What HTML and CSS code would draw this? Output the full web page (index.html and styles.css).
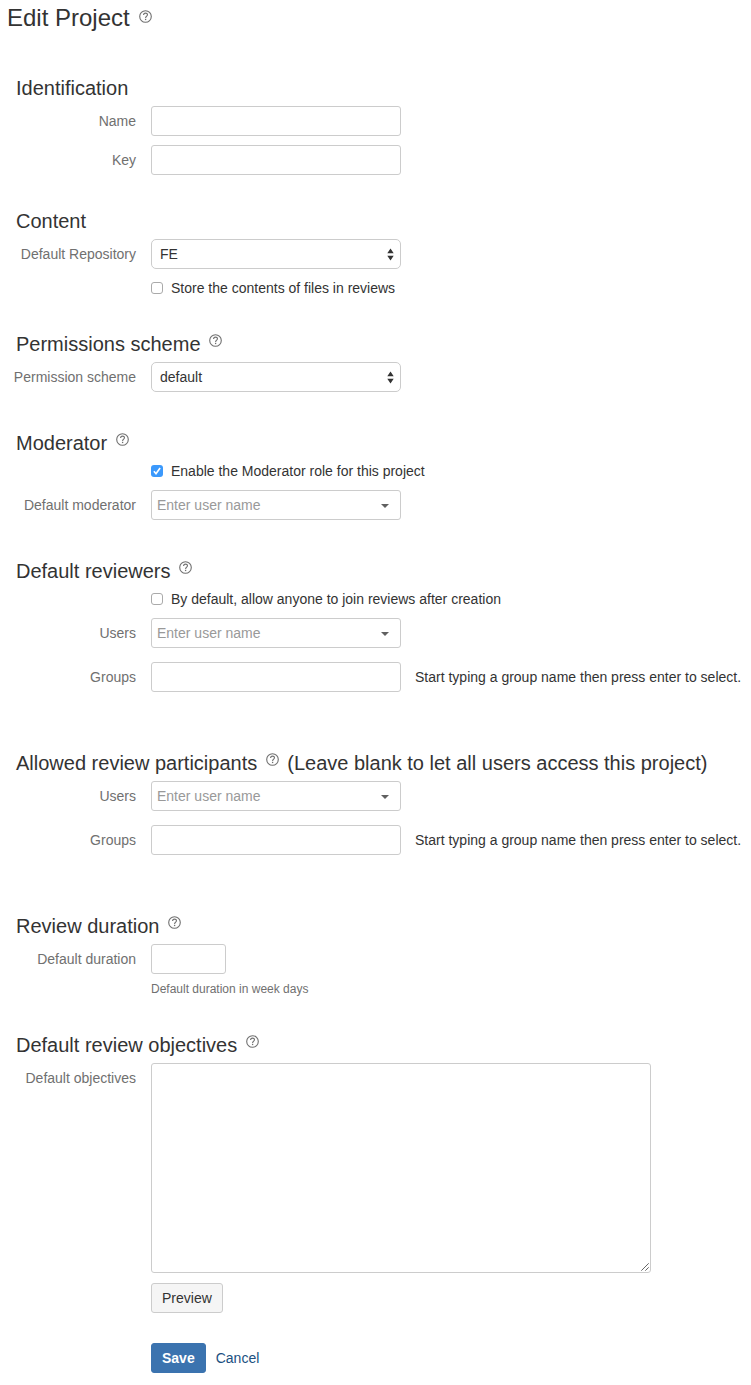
FILE: index.html
```html
<!DOCTYPE html>
<html lang="en">
<head>
<meta charset="utf-8">
<title>Edit Project</title>
<link rel="stylesheet" href="styles.css">
</head>
<body>
<svg class="defs" aria-hidden="true">
  <symbol id="help" viewBox="0 0 13 13">
    <circle cx="6.5" cy="6.5" r="5.8" fill="none" stroke="#707070" stroke-width="1.1"/>
    <path d="M4.6 5.1C4.6 3.8 5.4 3.1 6.5 3.1S8.5 3.8 8.5 4.8C8.5 6.1 6.6 6.2 6.6 8" fill="none" stroke="#707070" stroke-width="1.15"/>
    <rect x="5.95" y="8.8" width="1.3" height="1.3" fill="#707070"/>
  </symbol>
  <symbol id="updown" viewBox="0 0 7 13">
    <path d="M3.5 0.4L6.7 5.2H0.3ZM3.5 12.6L0.3 7.8H6.7Z" fill="#333"/>
  </symbol>
  <symbol id="caret" viewBox="0 0 8 4">
    <path d="M0 0H8L4 4Z" fill="#606060"/>
  </symbol>
</svg>
<main class="page">
  <h1 class="title">Edit Project <svg class="help"><use href="#help"/></svg></h1>
  <form class="form">
    <section class="section">
      <h2 class="heading">Identification</h2>
      <div class="row"><label class="label">Name</label><div class="box"></div></div>
      <div class="row"><label class="label">Key</label><div class="box"></div></div>
    </section>
    <section class="section">
      <h2 class="heading">Content</h2>
      <div class="row"><label class="label">Default Repository</label><div class="box select">FE<svg class="updown"><use href="#updown"/></svg></div></div>
      <div class="row check"><span class="tick"></span><span>Store the contents of files in reviews</span></div>
    </section>
    <section class="section">
      <h2 class="heading">Permissions scheme <svg class="help"><use href="#help"/></svg></h2>
      <div class="row"><label class="label">Permission scheme</label><div class="box select">default<svg class="updown"><use href="#updown"/></svg></div></div>
    </section>
    <section class="section spaced">
      <h2 class="heading">Moderator <svg class="help"><use href="#help"/></svg></h2>
      <div class="row check"><span class="tick checked"><svg class="mark" viewBox="0 0 12 12"><path d="M2.9 6.3L5 8.7L9.1 3.1" fill="none" stroke="#fff" stroke-width="1.7"/></svg></span><span>Enable the Moderator role for this project</span></div>
      <div class="row"><label class="label">Default moderator</label><div class="box picker">Enter user name<svg class="caret"><use href="#caret"/></svg></div></div>
    </section>
    <section class="section spaced">
      <h2 class="heading">Default reviewers <svg class="help"><use href="#help"/></svg></h2>
      <div class="row check"><span class="tick"></span><span>By default, allow anyone to join reviews after creation</span></div>
      <div class="row"><label class="label">Users</label><div class="box picker">Enter user name<svg class="caret"><use href="#caret"/></svg></div></div>
      <div class="row groups"><label class="label">Groups</label><div class="box"></div><span class="note">Start typing a group name then press enter to select.</span></div>
    </section>
    <section class="section wide">
      <h2 class="heading">Allowed review participants <svg class="help"><use href="#help"/></svg> <span class="aside">(Leave blank to let all users access this project)</span></h2>
      <div class="row"><label class="label">Users</label><div class="box picker">Enter user name<svg class="caret"><use href="#caret"/></svg></div></div>
      <div class="row groups"><label class="label">Groups</label><div class="box"></div><span class="note">Start typing a group name then press enter to select.</span></div>
    </section>
    <section class="section wide">
      <h2 class="heading">Review duration <svg class="help"><use href="#help"/></svg></h2>
      <div class="row"><label class="label">Default duration</label><div class="box short"></div></div>
      <p class="hint">Default duration in week days</p>
    </section>
    <section class="section">
      <h2 class="heading">Default review objectives <svg class="help"><use href="#help"/></svg></h2>
      <div class="row area-row"><label class="label">Default objectives</label><div class="box area"><svg class="grip" viewBox="0 0 8 8"><path d="M0.3 7.7L7.7 0.3M4.3 7.7L7.7 4.3" stroke="#555" stroke-width="0.9"/></svg></div></div>
      <button class="button" type="button">Preview</button>
    </section>
    <div class="actions"><button class="button primary" type="button">Save</button><a class="cancel">Cancel</a></div>
  </form>
</main>
</body>
</html>
```
FILE: styles.css
```css
* { box-sizing: border-box; }
body {
  margin: 0;
  background: #fff;
  color: #333;
  font: 14px/20px "Liberation Sans", Arial, sans-serif;
}
.defs { position: absolute; width: 0; height: 0; }
.page { padding-top: 3px; }
.title {
  display: flex;
  align-items: center;
  gap: 9px;
  height: 30px;
  margin: 0 0 40px 7px;
  font-size: 24px;
  font-weight: 400;
  line-height: 30px;
}
.heading {
  display: flex;
  align-items: center;
  height: 30px;
  margin: 0 0 3px 16px;
  font-size: 20px;
  font-weight: 400;
  line-height: 30px;
  white-space: nowrap;
}
.help { flex: none; width: 13px; height: 13px; margin-bottom: 4px; }
.heading .help { margin: 0 0 8px 8.5px; }
.aside { margin-left: 8.5px; }
.section + .section { margin-top: 31px; }
.section.spaced { margin-top: 36px; }
.section.wide { margin-top: 56px; }
.row { display: flex; align-items: center; }
.row + .row { margin-top: 9px; }
.row + .groups { margin-top: 14px; }
.label {
  width: 136px;
  margin-right: 15px;
  color: #707070;
  text-align: right;
  white-space: nowrap;
}
.box {
  display: flex;
  align-items: center;
  justify-content: space-between;
  flex: none;
  width: 250px;
  height: 30px;
  border: 1px solid #ccc;
  border-radius: 3px;
}
.select { padding: 0 6px 0 8px; border-radius: 5px; }
.updown { width: 7px; height: 13px; }
.picker { padding: 0 11px 0 5px; color: #999; }
.caret { width: 8px; height: 4px; margin-top: 2px; }
.short { width: 75px; }
.check { height: 20px; padding-left: 151px; gap: 8px; }
.tick {
  width: 12px;
  height: 12px;
  border: 1px solid #aaa;
  border-radius: 3px;
}
.checked { border: 0; background: #3b99fc; }
.mark { display: block; width: 12px; height: 12px; }
.note { margin-left: 14px; white-space: nowrap; }
.hint {
  margin: 5px 0 0 151px;
  color: #707070;
  font-size: 12px;
}
.area-row { align-items: flex-start; }
.area-row .label { padding-top: 5px; }
.area {
  width: 500px;
  height: 210px;
  align-items: flex-end;
  justify-content: flex-end;
  padding: 1px;
}
.grip { width: 8px; height: 8px; }
.button {
  display: block;
  height: 30px;
  padding: 0 10px;
  border: 1px solid #ccc;
  border-radius: 3px;
  background: #f5f5f5;
  color: #333;
  font: inherit;
}
.section > .button { margin: 10px 0 0 151px; }
.actions {
  display: flex;
  align-items: center;
  gap: 10px;
  margin: 30px 0 0 151px;
}
.primary {
  border-color: #3b73af;
  background: #3b73af;
  color: #fff;
  font-weight: 700;
}
.cancel { color: #205081; }
```
